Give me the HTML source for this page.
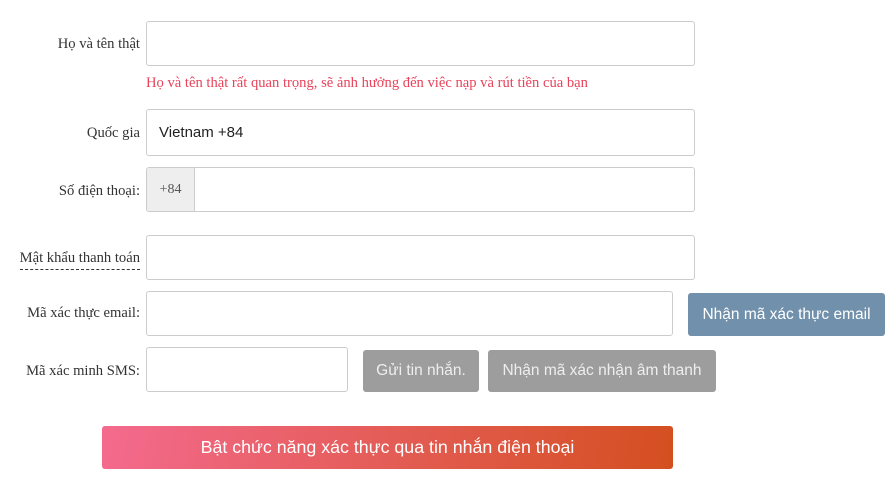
<!DOCTYPE html>
<html><head><meta charset="utf-8"><style>
body{margin:0;width:891px;height:486px;background:#fff;position:relative;overflow:hidden;font-family:"Liberation Serif","Noto Serif CJK SC",serif;}
.l{position:absolute;right:751px;font-size:14.6px;color:#333;white-space:nowrap;}
.i{position:absolute;box-sizing:border-box;border:1px solid #ccc;border-radius:3px;background:#fff;}
.b{position:absolute;box-sizing:border-box;border-radius:3px;color:#fff;font-family:"Liberation Sans",sans-serif;font-size:15.5px;display:flex;align-items:center;justify-content:center;white-space:nowrap;}
</style></head><body>
<div class="l" style="top:36px">Họ và tên thật</div>
<div class="i" style="left:146px;top:21px;width:549px;height:45px"></div>
<div style="position:absolute;left:146px;top:75px;font-size:14.6px;color:#e8435a;white-space:nowrap">Họ và tên thật rất quan trọng, sẽ ảnh hưởng đến việc nạp và rút tiền của bạn</div>
<div class="l" style="top:125px">Quốc gia</div>
<div class="i" style="left:146px;top:109px;width:549px;height:47px;font-family:'Liberation Sans',sans-serif;font-size:15px;color:#222;padding:14px 0 0 12px">Vietnam +84</div>
<div class="l" style="top:183px">Số điện thoại:</div>
<div class="i" style="left:146px;top:167px;width:549px;height:45px;overflow:hidden"><div style="position:absolute;left:0;top:0;width:47px;height:100%;background:#eee;border-right:1px solid #ccc;font-size:14px;color:#555;line-height:43px;text-align:center">+84</div></div>
<div class="l" style="top:250px;border-bottom:1px dashed #333;padding-bottom:2px">Mật khẩu thanh toán</div>
<div class="i" style="left:146px;top:235px;width:549px;height:45px"></div>
<div class="l" style="top:305px">Mã xác thực email:</div>
<div class="i" style="left:146px;top:291px;width:527px;height:45px"></div>
<div class="b" style="left:688px;top:293px;width:197px;height:43px;background:#7190ab">Nhận mã xác thực email</div>
<div class="l" style="top:363px">Mã xác minh SMS:</div>
<div class="i" style="left:146px;top:347px;width:202px;height:45px"></div>
<div class="b" style="left:363px;top:350px;width:116px;height:42px;background:#9d9d9d;color:#eee">Gửi tin nhắn.</div>
<div class="b" style="left:488px;top:350px;width:228px;height:42px;background:#9d9d9d;color:#eee">Nhận mã xác nhận âm thanh</div>
<div class="b" style="left:102px;top:426px;width:571px;height:43px;background:linear-gradient(100deg,#f46a8e,#d44f1f);font-size:17.8px">Bật chức năng xác thực qua tin nhắn điện thoại</div>
</body></html>
